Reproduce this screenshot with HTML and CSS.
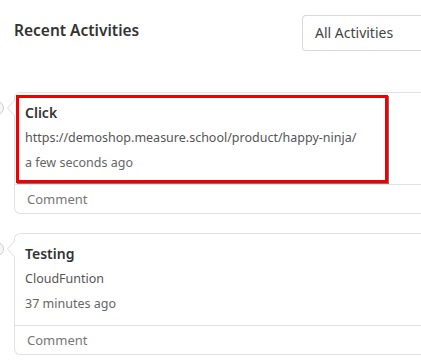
FILE: index.html
```html
<!DOCTYPE html>
<html lang="en">
<head>
    <meta charset="UTF-8">
    <meta name="viewport" content="width=device-width, initial-scale=1.0">
    <title>Recent Activities</title>
    <link rel="stylesheet" href="styles.css">
</head>
<body>
    <div class="panel">
        <div class="header">
            <h2>Recent Activities</h2>
            <div class="select">All Activities</div>
        </div>

        <div class="timeline">
            <div class="card">
                <span class="dot"></span>
                <div class="card-body highlight">
                    <div class="title">Click</div>
                    <div class="detail">https://demoshop.measure.school/product/happy-ninja/</div>
                    <div class="time">a few seconds ago</div>
                </div>
                <div class="comment">Comment</div>
            </div>

            <div class="card">
                <span class="dot"></span>
                <div class="card-body">
                    <div class="title">Testing</div>
                    <div class="detail">CloudFuntion</div>
                    <div class="time">37 minutes ago</div>
                </div>
                <div class="comment">Comment</div>
            </div>
        </div>
    </div>
</body>
</html>
```

FILE: styles.css
```css
* {
    margin: 0;
    padding: 0;
    box-sizing: border-box;
}

body {
    font-family: 'Noto Sans', sans-serif;
    background: white;
    overflow: hidden;
    width: 421px;
    height: 364px;
}

.panel {
    padding: 15px 0 0 14px;
}

.header {
    display: flex;
    justify-content: space-between;
    align-items: flex-start;
}

.header h2 {
    font-size: 15.5px;
    font-weight: 600;
    color: #333;
    line-height: 20px;
    margin-top: 5px;
}

/* dropdown is cut off by the right edge, so no right border */
.select {
    width: 119px;
    height: 36px;
    border: 1px solid #d9d9d9;
    border-right: none;
    border-radius: 4px 0 0 4px;
    padding: 0 12px;
    font-size: 14px;
    line-height: 34px;
    color: #444;
    white-space: nowrap;
}

.timeline {
    margin-top: 41px;
    display: flex;
    flex-direction: column;
    gap: 19px;
}

.card {
    position: relative;
    border: 1px solid #e2e2e2;
    border-right: none;
    border-radius: 6px 0 0 6px;
}

.card::before,
.card::after {
    content: '';
    position: absolute;
    top: 6px;
    border-top: 9px solid transparent;
    border-bottom: 9px solid transparent;
}

.card::before {
    left: -8px;
    border-right: 8px solid #dcdcdc;
}

.card::after {
    left: -7px;
    border-right: 8px solid white;
}

.dot {
    position: absolute;
    left: -25px;
    top: 8px;
    width: 14px;
    height: 14px;
    border-radius: 50%;
    border: 1px solid #d0d0d0;
    background: #f5f5f5;
}

.card-body {
    width: 372px;
    margin: 2px 0 1px 1px;
    padding: 2px 0 5px 6px;
    border: 3px solid transparent;
}

.card-body.highlight {
    border-color: #f00000;
    box-shadow: 1px 1px 0 #777;
}

.title,
.detail,
.time {
    line-height: 25px;
    white-space: nowrap;
}

.title {
    font-size: 14px;
    font-weight: 600;
    color: #333;
}

.detail {
    font-size: 12.5px;
    color: #555;
}

.time {
    font-size: 12.5px;
    color: #666;
}

.comment {
    border-top: 1px solid #e2e2e2;
    padding: 3px 0 0 12px;
    height: 29px;
    font-size: 13px;
    line-height: 22px;
    color: #777;
}
```
